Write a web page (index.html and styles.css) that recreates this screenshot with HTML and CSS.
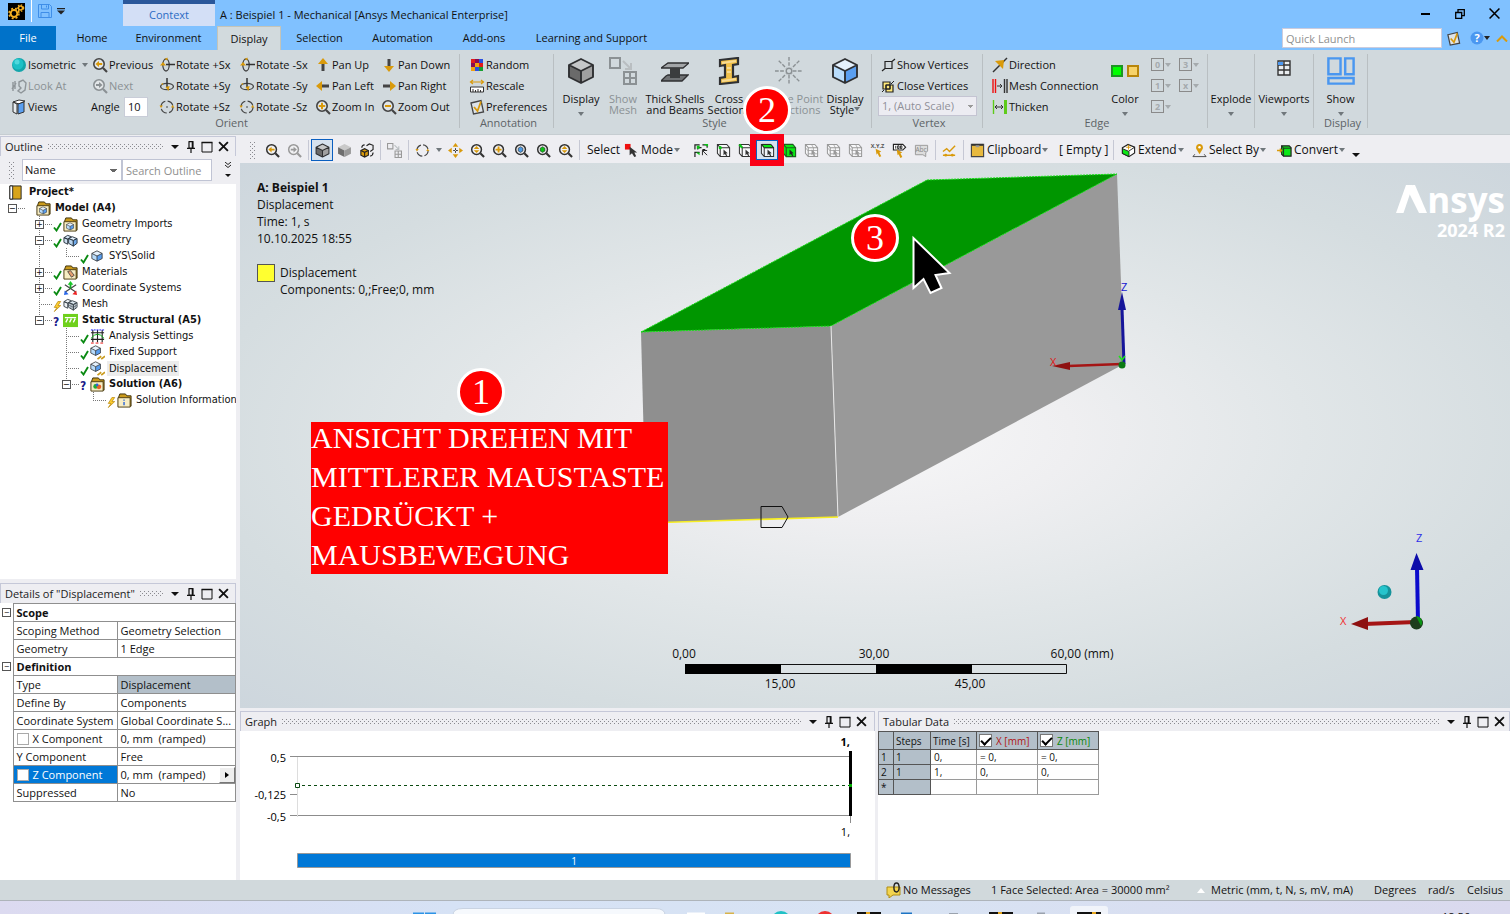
FILE: index.html
```html
<!DOCTYPE html>
<html lang="en">
<head>
<meta charset="utf-8">
<title>A : Beispiel 1 - Mechanical [Ansys Mechanical Enterprise]</title>
<link rel="stylesheet" href="styles.css">
</head>
<body>
<svg class="defs" aria-hidden="true">
  <symbol id="mag" viewBox="0 0 16 16"><circle cx="7" cy="7" r="5.2" fill="#f4f4f4" fill-opacity=".5" stroke="currentColor" stroke-width="1.6"/><path d="M11 11l4 4" stroke="currentColor" stroke-width="2.2"/></symbol>
  <symbol id="zoomprev" viewBox="0 0 16 16"><use href="#mag"/><path d="M3.5 7l3.5-3v2h3.200v2H7v2z" fill="#d99a0b"/></symbol>
  <symbol id="zoomnext" viewBox="0 0 16 16"><use href="#mag"/><path d="M10.500 7L7 4v2H4v2h3v2z" fill="currentColor"/></symbol>
  <symbol id="zoomin" viewBox="0 0 16 16"><use href="#mag"/><path d="M7 3.800v6.400M3.800 7h6.400" stroke="#d99a0b" stroke-width="2"/></symbol>
  <symbol id="zoomout" viewBox="0 0 16 16"><use href="#mag"/><path d="M4 7h6" stroke="#d99a0b" stroke-width="2"/></symbol>
  <symbol id="zoomdrag" viewBox="0 0 16 16"><use href="#mag"/><path d="M4 6.300L7 3.300l3 3zM4 7.700h6l-3 3z" fill="#d99a0b"/></symbol>
  <symbol id="zoomfit" viewBox="0 0 16 16"><use href="#mag"/><path d="M4.500 5.500L7 4l2.500 1.500v3L7 10 4.500 8.500z" fill="#4c9be8" stroke="#333" stroke-width=".7"/></symbol>
  <symbol id="zoomsel" viewBox="0 0 16 16"><use href="#mag"/><path d="M4.500 5.500L7 4l2.500 1.500v3L7 10 4.500 8.500z" fill="#0bc416" stroke="#333" stroke-width=".7"/></symbol>
  <symbol id="rotx" viewBox="0 0 16 16"><ellipse cx="7" cy="8" rx="3.200" ry="6" fill="none" stroke="#444" stroke-width="1.300"/><path d="M7 7.500h9" stroke="#333" stroke-width="1.500"/><path d="M1 8.500L4 5l3 3.500zM5.500 2l3-1.500v3z" fill="#d99a0b"/></symbol>
  <symbol id="roty" viewBox="0 0 16 16"><ellipse cx="8" cy="8.500" rx="6.400" ry="3.200" fill="none" stroke="#444" stroke-width="1.300"/><path d="M8 0v9" stroke="#333" stroke-width="1.500"/><path d="M6.500 9l4-1-1 5zM2 6l2-1v2z" fill="#d99a0b"/></symbol>
  <symbol id="rotz" viewBox="0 0 16 16"><circle cx="8" cy="8" r="6" fill="none" stroke="#444" stroke-width="1.200" stroke-dasharray="7 2.400"/><path d="M.5 6.500H4L2 9zM12 8.500h3.500L13.500 6z" fill="#d99a0b"/></symbol>
  <symbol id="rotdot" viewBox="0 0 16 16"><use href="#rotz"/><circle cx="8" cy="8" r=".8" fill="#333"/></symbol>
  <symbol id="up" viewBox="0 0 16 16"><path d="M6.500 7h3v7h-3z" fill="#444"/><path d="M8 1l5 6H3z" fill="#d99a0b"/></symbol>
  <symbol id="cube" viewBox="0 0 28 28"><path d="M2 8l12-6 12 6-12 6z" fill="#c5c7c8"/><path d="M2 8l12 6v12L2 20z" fill="#6a6a6a"/><path d="M26 8l-12 6v12l12-6z" fill="#a0a0a0"/><path d="M2 8l12-6 12 6v12l-12 6L2 20zM2 8l12 6 12-6M14 14v12" fill="none" stroke="#2f3032" stroke-width="1.900" stroke-linejoin="round"/></symbol>
  <symbol id="cubeblue" viewBox="0 0 28 28"><path d="M2 8l12-6 12 6-12 6z" fill="#e4f1fd"/><path d="M2 8l12 6v12L2 20z" fill="#b8dcfb"/><path d="M26 8l-12 6v12l12-6z" fill="#5a9ff0"/><path d="M2 8l12-6 12 6v12l-12 6L2 20zM2 8l12 6 12-6M14 14v12" fill="none" stroke="#2f3032" stroke-width="1.900" stroke-linejoin="round"/></symbol>
  <symbol id="cubeplain" viewBox="0 0 28 28"><path d="M2 8l12-6 12 6-12 6z" fill="#c9c9c9"/><path d="M2 8l12 6v12L2 20z" fill="#6e6e6e"/><path d="M26 8l-12 6v12l12-6z" fill="#999"/></symbol>
  <symbol id="mesh" viewBox="0 0 28 28"><path d="M1 1h10v10H1zM15 15h12v12H15zM21 15v12M15 21h12" fill="none" stroke="currentColor" stroke-width="2"/><path d="M14 4l7 7M22 6v6h-6" fill="none" stroke="#b9bec1" stroke-width="2"/></symbol>
  <symbol id="selbox" viewBox="0 0 16 16"><path d="M1.500 1.500h10l3 3.500v9.500h-10l-3-3.500zM4.500 5v9.500M4.500 5h10M1.500 1.500l3 3.500" fill="#fff" fill-opacity=".6" stroke="currentColor" stroke-width="1.100"/><path d="M8 7v6l1.500-1.200 1.500 2.200 1-.7-1.300-2 1.800-.3z" fill="currentColor"/></symbol>
  <symbol id="meshbox" viewBox="0 0 16 16"><use href="#selbox"/><path d="M4.500 8h10M4.500 11.500h10M8 1.500l2 3.500v9.500M1.500 5l3 3.500" fill="none" stroke="currentColor" stroke-width=".8"/></symbol>
  <symbol id="pin" viewBox="0 0 10 12"><path d="M2.500.7h5M3 .7v6.500h4V.7M6.300.7v6.500M1 7.300h8M5 7.500V12" fill="none" stroke="#111" stroke-width="1.200"/></symbol>
  <symbol id="max" viewBox="0 0 12 12"><path d="M1 1.500h10v9.500H1z" fill="none" stroke="#111" stroke-width="1"/><path d="M.5 1.500h11" stroke="#111" stroke-width="1.500"/></symbol>
  <symbol id="x" viewBox="0 0 10 10"><path d="M1 1l8 8M9 1L1 9" stroke="#111" stroke-width="1.700"/></symbol>
  <symbol id="ok" viewBox="0 0 9 10"><path d="M1 6l2.500 3L8 1.500" fill="none" stroke="#0a8a12" stroke-width="1.900"/></symbol>
  <symbol id="bolt" viewBox="0 0 9 12"><path d="M5 .5L1 7h3L1 11.500 8 5H5l3-4.500z" fill="#ffcf30" stroke="#b8860b" stroke-width=".8"/></symbol>
  <symbol id="folder" viewBox="0 0 16 16"><path d="M3 1h6l1.500 2H15v11H1.500V5z" fill="#c99a1c" stroke="#3a2d08"/><path d="M1 5h13v10H1z" fill="#f7edc4" stroke="#4a3b10"/></symbol>
  <symbol id="foldcube" viewBox="0 0 16 16"><use href="#folder"/><use href="#cubeblue" x="3" y="5.500" width="9" height="9"/></symbol>
  <symbol id="bodies" viewBox="0 0 16 16"><path d="M1 5l4-2.500 4 1.500L5 6.500zM1 5v5l4 2V6.500z" fill="#cfe0f0" stroke="#29343f"/><path d="M6 6l4-2 5 2-4 2z" fill="#e4f1fd" stroke="#29343f"/><path d="M6 6v5l5 3V8z" fill="#b8d4ef" stroke="#29343f"/><path d="M15 6v5l-4 3V8z" fill="#6fa9ea" stroke="#29343f"/></symbol>
  <symbol id="bodiesgray" viewBox="0 0 16 16"><path d="M1 5l4-2.500 4 1.500L5 6.500zM1 5v5l4 2V6.500z" fill="#eef2f5" stroke="#3d464e"/><path d="M6 6l4-2 5 2-4 2zM6 6v5l5 3V8zM15 6v5l-4 3V8z" fill="#dbe6ef" stroke="#3d464e"/><path d="M6 8.500l5 2.500 4-2.500M8.500 7v5.500M13 7v5.500" fill="none" stroke="#3d464e" stroke-width=".6"/></symbol>
  <symbol id="bc" viewBox="0 0 16 16"><use href="#cubeblue" width="12" height="12"/><path d="M8 15l4-3M12 15l4-3" stroke="#c99a1c" stroke-width="1.800"/></symbol>
  <symbol id="pref" viewBox="0 0 16 16"><path d="M2 4l10-2.500L14.500 13 4.500 15z" fill="#dde3e8" stroke="#444" stroke-width="1.300"/><path d="M5 8l3.500 4L12 2.500" fill="none" stroke="#d99a0b" stroke-width="1.800"/></symbol>
</svg>

<div class="app">
<header class="titlebar">
  <svg class="applogo" viewBox="0 0 17 17"><path fill="#000" d="M0 0h17v17H0z"/><circle cx="6" cy="10.500" r="3.400" fill="none" stroke="#f5b021" stroke-width="2"/><circle cx="6" cy="10.500" r="5" fill="none" stroke="#f5b021" stroke-width="1.500" stroke-dasharray="2 2"/><circle cx="12.500" cy="5" r="2" fill="none" stroke="#f5b021" stroke-width="1.500"/><circle cx="12.500" cy="5" r="3.200" fill="none" stroke="#f5b021" stroke-width="1.200" stroke-dasharray="1.500 1.500"/></svg>
  <span class="vline"></span>
  <button class="flat" aria-label="Save"><svg width="14" height="14" viewBox="0 0 14 14"><path d="M.5.500h11l2 2v11H.5zM3.500.500v4.500h7V.5M8.500 1.500v2M3 13.500v-5h8v5" fill="none" stroke="#3f8ee8"/></svg></button>
  <button class="flat" aria-label="Customize"><svg width="8" height="7" viewBox="0 0 8 7"><path d="M0 0h8v1.300H0zM0 2.500h8L4 6.500z" fill="#222"/></svg></button>
  <span class="context">Context</span>
  <h1>A : Beispiel 1 - Mechanical [Ansys Mechanical Enterprise]</h1>
  <div class="winbtns">
    <button class="flat" aria-label="Minimize"><svg width="10" height="10" viewBox="0 0 10 10"><path d="M0 6h9" stroke="#000" stroke-width="2"/></svg></button>
    <button class="flat" aria-label="Restore"><svg width="10" height="12" viewBox="0 0 10 12"><path d="M3 5V2.700h6.300v6H7M.7 5.500h6v6h-6z" fill="none" stroke="#000" stroke-width="1.300"/></svg></button>
    <button class="flat" aria-label="Close"><svg width="11" height="11" viewBox="0 0 10 10"><path d="M.5.500l9 9M9.500.500l-9 9" stroke="#000" stroke-width="1.400"/></svg></button>
  </div>
</header>
<nav class="tabs">
  <button class="tab file">File</button><button class="tab t1">Home</button><button class="tab t2">Environment</button><button class="tab on">Display</button><button class="tab t3">Selection</button><button class="tab t4">Automation</button><button class="tab t5">Add-ons</button><button class="tab t6">Learning and Support</button>
  <div class="quick">
    <input type="text" placeholder="Quick Launch" aria-label="Quick Launch">
    <button class="flat" aria-label="Options"><svg width="15" height="15"><use href="#pref"/></svg></button>
    <button class="flat" aria-label="Help"><svg width="22" height="14" viewBox="0 0 22 14"><circle cx="7" cy="7" r="6.500" fill="#4a97f0"/><text x="7" y="11" text-anchor="middle" class="q">?</text><path d="M14 5h6l-3 4z" fill="#222"/></svg></button>
    <button class="flat" aria-label="Collapse ribbon"><svg width="12" height="7" viewBox="0 0 12 7"><path d="M1 6.500L6 1.500l5 5" fill="none" stroke="#d99a0b" stroke-width="2"/></svg></button>
  </div>
</nav>

<section class="ribbon">
  <div class="group g-orient">
    <div class="orient">
      <button class="rb"><svg viewBox="0 0 16 16"><circle cx="8" cy="8" r="7" fill="#13a5ab"/><circle cx="7" cy="7" r="5.500" fill="#1cc0c6"/><circle cx="6" cy="5" r="2.500" fill="#4fd8dc"/></svg>Isometric<i class="caret gap"></i></button>
      <button class="rb"><svg><use href="#zoomprev"/></svg>Previous</button>
      <button class="rb"><svg><use href="#rotx"/></svg>Rotate +Sx</button>
      <button class="rb"><svg><use href="#rotx"/></svg>Rotate -Sx</button>
      <button class="rb"><svg><use href="#up"/></svg>Pan Up</button>
      <button class="rb"><svg class="r180"><use href="#up"/></svg>Pan Down</button>
      <button class="rb off"><svg viewBox="0 0 16 16"><path d="M2 4v9M4 3v8M1 11l4-6M8 4l4-2 3 3-1 7-4 3-3-2 3-3-2-2z" fill="none" stroke="#8e9599" stroke-width="1.400"/></svg>Look At</button>
      <button class="rb off"><svg><use href="#zoomnext"/></svg>Next</button>
      <button class="rb"><svg><use href="#roty"/></svg>Rotate +Sy</button>
      <button class="rb"><svg><use href="#roty"/></svg>Rotate -Sy</button>
      <button class="rb"><svg class="r270"><use href="#up"/></svg>Pan Left</button>
      <button class="rb"><svg class="r90"><use href="#up"/></svg>Pan Right</button>
      <button class="rb"><svg viewBox="0 0 16 16"><path d="M2 3l4 2v10l-4-2z" fill="#e7ecef" stroke="#333"/><path d="M2 3l6-2 6 1-6 3z" fill="#fff" stroke="#333"/><path d="M7 5l6-2v10l-6 2z" fill="#5a9ff0" stroke="#333"/></svg>Views</button>
      <div class="angle"><label for="angle">Angle</label><input id="angle" type="text" value="10"></div>
      <button class="rb"><svg><use href="#rotdot"/></svg>Rotate +Sz</button>
      <button class="rb"><svg><use href="#rotdot"/></svg>Rotate -Sz</button>
      <button class="rb"><svg><use href="#zoomin"/></svg>Zoom In</button>
      <button class="rb"><svg><use href="#zoomout"/></svg>Zoom Out</button>
    </div>
    <h2>Orient</h2>
  </div>
  <div class="group g-annot">
    <div class="stack">
      <button class="rb"><svg viewBox="0 0 16 16"><path fill="#e21a1a" d="M2 2h4v4H2zM10 6h4v4h-4z"/><path fill="#8a0a50" d="M6 2h4v4H6zM2 6h4v4H2z"/><path fill="#2a50e0" d="M10 2h4v4h-4zM6 10h4v4H6z"/><path fill="#f0a010" d="M6 6h4v4H6zM2 10h4v4H2z"/><path fill="#16a030" d="M10 10h4v4h-4z"/></svg>Random</button>
      <button class="rb"><svg viewBox="0 0 16 16"><path d="M2 4h12M4 2L1.500 4 4 6M12 2l2.500 2L12 6" fill="none" stroke="#d99a0b" stroke-width="1.200"/><path d="M1.500 9h13v5h-13zM4 11v3M6.500 12v2M9 11v3M11.500 12v2" fill="#fff" stroke="#333"/></svg>Rescale</button>
      <button class="rb"><svg><use href="#pref"/></svg>Preferences</button>
    </div>
    <h2>Annotation</h2>
  </div>
  <div class="group g-style">
    <div class="bigs">
      <button class="big w1"><svg><use href="#cube"/></svg><span>Display</span><i class="caret"></i></button>
      <button class="big w2 off"><svg><use href="#mesh"/></svg><span>Show<br>Mesh</span></button>
      <button class="big w3"><svg viewBox="0 0 28 28"><path d="M7 6h21l-6 5H0z" fill="#a3a6a8" stroke="#2f3032" stroke-width="1.300"/><path d="M9 11h10v8H9z" fill="#3b3d3e"/><path d="M7 18h20l-6 6H0l5-5z" fill="#6f7274" stroke="#2f3032" stroke-width="1.300"/><path d="M9 11h10v10H9z" fill="#3b3d3e"/></svg><span>Thick Shells<br>and Beams</span></button>
      <button class="big w4"><svg viewBox="0 0 28 28"><path d="M5 3l18-2v6l-5 1v12l5-1v6L5 27v-6l5-1V8l-5 1z" fill="#f2c14a" stroke="#2f3032" stroke-width="2.200"/><path d="M7 6l14-2M12 11h4M12 15h4M7 24l14-2" stroke="#fff6" stroke-width="2"/></svg><span>Cross<br>Sections</span></button>
      <button class="big w5 off"><svg class="wide" viewBox="0 0 30 30"><circle cx="15" cy="15" r="3" fill="none" stroke="#8b9194" stroke-width="1.500"/><path d="M15 0v11M15 19v11M0 15h11M19 15h11M4 4l8 8M26 4l-8 8M4 26l8-8M26 26l-8-8" stroke="#8b9194" stroke-width="1.500" stroke-dasharray="4 1.500"/></svg><span>Remote Point<br>Connections</span></button>
      <button class="big w6"><svg><use href="#cubeblue"/></svg><span>Display<br>Style<i class="caret"></i></span></button>
    </div>
    <h2>Style</h2>
  </div>
  <div class="group g-vertex">
    <div class="stack">
      <button class="rb"><svg viewBox="0 0 16 16"><path d="M5 4.500h7v7H5zM12 4.500L15 2M5 11.500L2 14" fill="none" stroke="#222" stroke-width="1.200"/></svg>Show Vertices</button>
      <button class="rb"><svg viewBox="0 0 16 16"><path d="M3 4h7v7H3zM6 7h7v7H6z" fill="#ffe97a" stroke="#222" stroke-width="1.200"/><path d="M6 7h4v4H6zM14 3l-3 3M2 14l2-2" fill="none" stroke="#222"/></svg>Close Vertices</button>
      <select disabled aria-label="Vertex scale"><option>1, (Auto Scale)</option></select>
    </div>
    <h2>Vertex</h2>
  </div>
  <div class="group g-edge">
    <div class="edge">
      <div class="stack">
        <button class="rb"><svg viewBox="0 0 16 16"><path d="M1 15L15 1" stroke="#333" stroke-width="1.500"/><path d="M3 4l9-1-1 9-3-3z" fill="#d99a0b"/></svg>Direction</button>
        <button class="rb"><svg viewBox="0 0 16 16"><path d="M1 1v14M3.500 1v14" stroke="#e11" stroke-width="1.400"/><path d="M12.500 1v14M15 1v14" stroke="#333" stroke-width="1.400"/><path d="M5 8h5M8 6l2 2-2 2" fill="none" stroke="#333"/></svg>Mesh Connection</button>
        <button class="rb"><svg viewBox="0 0 16 16"><path d="M1.500 1v14" stroke="#5ecb1a" stroke-width="1.400"/><path d="M12 1h3v14h-3z" fill="#5ecb1a"/><path d="M3 8h8M5 6L3 8l2 2M9 6l2 2-2 2" fill="none" stroke="#333"/></svg>Thicken</button>
      </div>
      <button class="big color"><svg class="wide" viewBox="0 0 30 28"><path d="M2 9h10v10H2z" fill="#0f0" stroke="#1d9424" stroke-width="2"/><path d="M18 9h10v10H18z" fill="#f7d36a" stroke="#b8860b" stroke-width="2"/></svg><span>Color</span><i class="caret"></i></button>
      <div class="types">
        <button class="ty"><b>0</b><i class="caret"></i></button><button class="ty"><b>3</b><i class="caret"></i></button>
        <button class="ty"><b>1</b><i class="caret"></i></button><button class="ty"><b>x</b><i class="caret"></i></button>
        <button class="ty"><b>2</b><i class="caret"></i></button>
      </div>
    </div>
    <h2>Edge</h2>
  </div>
  <div class="group g-exp"><button class="big"><svg></svg><span>Explode</span><i class="caret"></i></button></div>
  <div class="group g-view"><button class="big"><svg viewBox="0 0 28 28"><path d="M8 4h12v14H8zM14 4v14M8 8h12M8 13h12" fill="#e9edef" stroke="#333" stroke-width="1.400"/><path d="M8 5h5v3H8z" fill="#4a97f0"/></svg><span>Viewports</span><i class="caret"></i></button></div>
  <div class="group g-show"><button class="big"><svg class="wide" viewBox="0 0 30 30"><path d="M1.500 1.500h13v17h-13zM19.500 1.500h9v17h-9zM1.500 22.500h27v6h-27z" fill="none" stroke="#4a97f0" stroke-width="2.600"/></svg><span>Show</span><i class="caret"></i></button><h2>Display</h2></div>
</section>

<main class="work">
  <aside class="left">
    <section class="panel outline">
      <header class="phead"><h2>Outline</h2><i class="dots"></i><button class="pb" aria-label="Menu"><i class="caret dark"></i></button><button class="pb" aria-label="Pin"><svg width="10" height="12"><use href="#pin"/></svg></button><button class="pb" aria-label="Maximize"><svg width="12" height="12"><use href="#max"/></svg></button><button class="pb" aria-label="Close"><svg width="11" height="11"><use href="#x"/></svg></button></header>
      <div class="filter"><i class="grip"></i><select aria-label="Filter by"><option>Name</option></select><input type="text" placeholder="Search Outline" aria-label="Search Outline"><button class="more" aria-label="More"><svg width="6" height="16" viewBox="0 0 6 16"><path d="M0 0l3 2.500L6 0M0 3l3 2.500L6 3" fill="none" stroke="#222"/><path d="M0 12h6l-3 3z" fill="#111"/></svg></button></div>
      <ul class="tree">
        <li class="root"><div class="row proj"><svg viewBox="0 0 16 16"><path d="M2 1h12v14H2z" fill="#d8a41a" stroke="#222"/><path d="M2 1h3v14H2z" fill="#fff" stroke="#222"/></svg><b>Project*</b></div></li>
        <li class="top"><div class="row"><button class="ex">&#8722;</button><i class="st"></i><svg><use href="#foldcube"/></svg><b>Model (A4)</b></div>
          <ul>
            <li><div class="row"><button class="ex">+</button><svg class="st"><use href="#ok"/></svg><svg><use href="#foldcube"/></svg>Geometry Imports</div></li>
            <li><div class="row"><button class="ex">&#8722;</button><svg class="st"><use href="#ok"/></svg><svg><use href="#bodies"/></svg>Geometry</div>
              <ul><li><div class="row leaf"><svg class="st"><use href="#ok"/></svg><svg class="sm"><use href="#cubeblue"/></svg>SYS\Solid</div></li></ul></li>
            <li><div class="row"><button class="ex">+</button><svg class="st"><use href="#ok"/></svg><svg viewBox="0 0 16 16"><use href="#folder"/><path d="M5 7l3-1 4 5-3 2z" fill="#e6a070" stroke="#333" stroke-width=".8"/></svg>Materials</div></li>
            <li><div class="row"><button class="ex">+</button><svg class="st"><use href="#ok"/></svg><svg viewBox="0 0 16 16"><path d="M2 4l12 8M14 4L2 12" stroke="#444" stroke-width="1.300"/><path d="M8 8V3" stroke="#17a827" stroke-width="2"/><path d="M5 4l3-4 3 4z" fill="#17c827"/><path d="M1 15l1-5 4 4z" fill="#2866e8"/><path d="M15 15l-1-5-4 4z" fill="#e22"/></svg>Coordinate Systems</div></li>
            <li><div class="row leaf"><svg class="st"><use href="#bolt"/></svg><svg><use href="#bodiesgray"/></svg>Mesh</div></li>
            <li><div class="row"><button class="ex">&#8722;</button><b class="st qm">?</b><svg viewBox="0 0 16 16"><path fill="#6fd01c" d="M0 1h16v14H0z"/><path d="M2 5h12M5 6l-2 4M9 6l-2 4M13 6l-2 4" stroke="#fff" stroke-width="1.400"/></svg><b>Static Structural (A5)</b></div>
              <ul>
                <li><div class="row leaf"><svg class="st"><use href="#ok"/></svg><svg viewBox="0 0 16 16"><path d="M3 1v13M8 1v13M13 1v13M1 4h14M1 11h14" stroke="#222" stroke-width="1.200"/><path d="M1 10q7-9 14 0" fill="none" stroke="#0db81b"/><path d="M1 1h14" stroke="#11f" stroke-dasharray="2 1"/><path d="M1 15h14" stroke="#e11" stroke-dasharray="3 2"/></svg>Analysis Settings</div></li>
                <li><div class="row leaf"><svg class="st"><use href="#ok"/></svg><svg><use href="#bc"/></svg>Fixed Support</div></li>
                <li><div class="row leaf"><svg class="st"><use href="#ok"/></svg><svg><use href="#bc"/></svg><span class="cur">Displacement</span></div></li>
                <li><div class="row"><button class="ex">&#8722;</button><b class="st qm">?</b><svg viewBox="0 0 16 16"><use href="#folder"/><circle cx="6" cy="10" r="2.500" fill="#1fae35"/><circle cx="9.500" cy="10.500" r="2.500" fill="#e8622a"/><circle cx="7.500" cy="8.500" r="1.500" fill="#2b66d8"/></svg><b>Solution (A6)</b></div>
                  <ul><li><div class="row leaf"><svg class="st"><use href="#bolt"/></svg><svg viewBox="0 0 16 16"><use href="#folder"/><path d="M7.500 9.500V13M7.500 7v1.300" stroke="#2b66d8" stroke-width="1.500"/></svg>Solution Information</div></li></ul></li>
              </ul></li>
          </ul></li>
      </ul>
    </section>
    <section class="panel details">
      <header class="phead"><h2>Details of "Displacement"</h2><i class="dots"></i><button class="pb" aria-label="Menu"><i class="caret dark"></i></button><button class="pb" aria-label="Pin"><svg width="10" height="12"><use href="#pin"/></svg></button><button class="pb" aria-label="Maximize"><svg width="12" height="12"><use href="#max"/></svg></button><button class="pb" aria-label="Close"><svg width="11" height="11"><use href="#x"/></svg></button></header>
      <table class="props">
        <colgroup><col class="k0"><col class="k1"><col></colgroup>
        <tr><td class="gut"><button class="ex">&#8722;</button></td><th colspan="2">Scope</th></tr>
        <tr><td class="gut"></td><td>Scoping Method</td><td>Geometry Selection</td></tr>
        <tr><td class="gut"></td><td>Geometry</td><td>1 Edge</td></tr>
        <tr><td class="gut"><button class="ex">&#8722;</button></td><th colspan="2">Definition</th></tr>
        <tr><td class="gut"></td><td>Type</td><td class="ro">Displacement</td></tr>
        <tr><td class="gut"></td><td>Define By</td><td>Components</td></tr>
        <tr><td class="gut"></td><td>Coordinate System</td><td>Global Coordinate S...</td></tr>
        <tr><td class="gut"></td><td><label><input type="checkbox">X Component</label></td><td>0, mm&nbsp; (ramped)</td></tr>
        <tr><td class="gut"></td><td>Y Component</td><td>Free</td></tr>
        <tr><td class="gut"></td><td class="picked"><label><input type="checkbox">Z Component</label></td><td><div class="cell">0, mm&nbsp; (ramped)<button class="fly" aria-label="Options"><svg width="4" height="6" viewBox="0 0 4 6"><path d="M0 0l4 3-4 3z"/></svg></button></div></td></tr>
        <tr><td class="gut"></td><td>Suppressed</td><td>No</td></tr>
      </table>
    </section>
  </aside>

  <div class="right">
    <div class="toolbar">
      <i class="grip"></i>
      <button class="tb" aria-label="Previous view"><svg><use href="#zoomprev"/></svg></button>
      <button class="tb off" aria-label="Next view"><svg><use href="#zoomnext"/></svg></button>
      <i class="sep"></i>
      <button class="tb sel" aria-label="Shaded with edges"><svg><use href="#cube"/></svg></button>
      <button class="tb" aria-label="Shaded"><svg><use href="#cubeplain"/></svg></button>
      <button class="tb" aria-label="Wireframe"><svg viewBox="0 0 16 16"><path d="M2 8l4-2 4 2v5l-4 2-4-2z" fill="#d99a0b" stroke="#222" stroke-width="1.200"/><path d="M2 8l4 2 4-2M6 10v5M8 3l3-2 4 1.500V7l-3 2M3 5q0-3 3-3M15 10q0 3-3 4" fill="none" stroke="#222" stroke-width="1.200"/></svg></button>
      <i class="sep"></i>
      <button class="tb off" aria-label="Show mesh"><svg><use href="#mesh"/></svg></button>
      <i class="sep"></i>
      <button class="tb" aria-label="Rotate"><svg><use href="#rotz"/></svg></button><i class="caret c11"></i>
      <button class="tb" aria-label="Pan"><svg viewBox="0 0 16 16"><path d="M8 0l3 4H5zM8 16l3-4H5zM0 8l4-3v6zM16 8l-4-3v6z" fill="#d99a0b"/><path d="M5.500 8h5M8 5.500v5" stroke="#333" stroke-dasharray="2 1"/></svg></button>
      <button class="tb" aria-label="Zoom"><svg><use href="#zoomdrag"/></svg></button>
      <button class="tb" aria-label="Box zoom"><svg><use href="#zoomin"/></svg></button>
      <button class="tb" aria-label="Zoom to fit"><svg><use href="#zoomfit"/></svg></button>
      <button class="tb" aria-label="Zoom to selection"><svg><use href="#zoomsel"/></svg></button>
      <button class="tb" aria-label="Zoom extents"><svg><use href="#zoomdrag"/></svg></button>
      <i class="sep"></i>
      <span class="tt w-sel">Select</span>
      <button class="tl w-mode"><svg viewBox="0 0 16 16"><path fill="#f01010" d="M1 1h6v6H1z"/><path d="M6 4v9l2.500-2 2.500 4 2-1-2-4h3z" fill="#333"/></svg>Mode<i class="caret"></i></button>
      <button class="tb" aria-label="Smart select"><svg viewBox="0 0 16 16"><path d="M1 7V2h5M9 2h5v3M1 15v-5h5M4 7V5h4M9 7h3" fill="none" stroke="#222" stroke-width="1.300"/><path d="M3 3h3v3H3zM10 1h5v3zM2 10h4v3z" fill="#0bc416"/><path d="M9 8l5 5M9 8v5M9 8h5" stroke="#222"/></svg></button>
      <button class="tb" aria-label="Vertex"><svg viewBox="0 0 16 16"><use href="#selbox"/><circle cx="4.500" cy="5" r="1.700" fill="#0bc416"/></svg></button>
      <button class="tb" aria-label="Edge"><svg viewBox="0 0 16 16"><use href="#selbox"/><path d="M1.500 1.500l3 3.500" fill="none" stroke="#0bc416" stroke-width="2.400"/></svg></button>
      <span class="marked"><button class="tb sel" aria-label="Face"><svg viewBox="0 0 16 16"><use href="#selbox"/><path d="M2 1.500h9.500l3 3.500h-10z" fill="#0be816" stroke="#222"/></svg></button><span class="badge b2">2</span></span>
      <button class="tb" aria-label="Body"><svg viewBox="0 0 16 16"><path d="M1.500 1.500h10l3 3.500v9.500h-10l-3-3.500zM4.500 5v9.500M4.500 5h10M1.500 1.500l3 3.500" fill="#0be816" stroke="#1b5f1f" stroke-width="1.200"/><path d="M8 7v6l1.500-1.200 1.500 2.200 1-.7-1.300-2 1.800-.3z" fill="#222"/></svg></button>
      <button class="tb off" aria-label="Node"><svg><use href="#meshbox"/></svg></button>
      <button class="tb off" aria-label="Element face"><svg><use href="#meshbox"/></svg></button>
      <button class="tb off" aria-label="Element"><svg><use href="#meshbox"/></svg></button>
      <button class="tb" aria-label="Coordinates"><svg viewBox="0 0 16 16"><text x="8" y="5" text-anchor="middle" class="xyz">X,Y,Z</text><path d="M6 6l6 3-2 1 2 4-2 1-2-4-1 1.500z" fill="#d99a0b"/></svg></button>
      <button class="tb" aria-label="Probe"><svg viewBox="0 0 16 16"><path d="M1.500 1.500h10l3 3-3 3h-10z" fill="#fff" stroke="#222" stroke-width="1.200"/><path d="M4 3v3M6 3h1.500v3H6zM9 3h1.500v3H9z" fill="none" stroke="#222"/><path d="M5 7l6 3-2 1 2 4-2 1-2-4-1 1z" fill="#d99a0b"/></svg></button>
      <button class="tb off" aria-label="Label"><svg viewBox="0 0 16 16"><path d="M1.500 2.500h13v6l-2 2v4l-3-2h-8z" fill="#ddd" stroke="#999"/><text x="7.500" y="10" text-anchor="middle" class="abc">Abc</text></svg></button>
      <i class="sep"></i>
      <button class="tb" aria-label="Chart"><svg viewBox="0 0 16 16"><path d="M1 9l4-3 3 3 6-6M1 13h13" fill="none" stroke="#d99a0b" stroke-width="1.500"/><circle cx="4" cy="13" r="1.500" fill="#d99a0b"/><circle cx="11" cy="13" r="1.500" fill="#d99a0b"/></svg></button>
      <i class="sep"></i>
      <button class="tl w-clip"><svg viewBox="0 0 16 16"><path d="M1.500 1.500h13v13h-13z" fill="#e8b93e" stroke="#444" stroke-width="1.200"/><path d="M2 1h12v2H2z" fill="#333"/><path d="M6 2.500h4v2H6z" fill="#999"/></svg>Clipboard<i class="caret"></i></button>
      <span class="tt w-empty">[ Empty ]</span>
      <i class="sep"></i>
      <button class="tl w-ext"><svg viewBox="0 0 16 16"><path d="M1.500 5l6-3.500 7 3v6l-6 4-7-3.500z" fill="#fff" stroke="#222" stroke-width="1.200"/><path d="M14.500 4.500l-6 4" stroke="#222"/><path d="M1.500 6l7 3v5.500l-7-3.500z" fill="#0be816" stroke="#222"/><path d="M8 2v5M5.500 4.500h5" stroke="#d99a0b"/></svg>Extend<i class="caret"></i></button>
      <button class="tl w-by"><svg viewBox="0 0 16 16"><path d="M8 12L4.500 6a3.700 3.700 0 1 1 7 0z" fill="#d99a0b"/><circle cx="8" cy="4.500" r="1.300" fill="#fff"/><path d="M3 12l-2 2.500h14L13 12" fill="none" stroke="#444"/></svg>Select By<i class="caret"></i></button>
      <button class="tl w-conv"><svg viewBox="0 0 16 16"><path d="M5 3h8l2 2v9H7l-2-2z" fill="#0be816" stroke="#222" stroke-width="1.300"/><path d="M5 3l2 2.500V14M7 5.500h8" fill="none" stroke="#222"/><path d="M0 8h5M3 6l2 2-2 2" fill="none" stroke="#d99a0b" stroke-width="1.400"/></svg>Convert<i class="caret"></i></button>
      <button class="flat ovf" aria-label="More"><i class="caret dark"></i></button>
    </div>

    <section class="canvas">
      <svg class="scene" viewBox="240 163 1270 545" preserveAspectRatio="xMinYMin meet">
        <path d="M641 332l190-6 7 191-192 6z" fill="#8f8f8f"/>
        <path d="M831 326l286-152 7 190-286 153z" fill="#999"/>
        <path d="M641 332l286-152 190-6-286 152z" fill="#009600" stroke="#18e018" stroke-width="1" stroke-dasharray="2 1"/>
        <path d="M831 326l7 191" stroke="#e8e8e8"/>
        <path d="M646 523l192-6" stroke="#f7ee22" stroke-width="1.500"/>
        <path d="M761 506.500h21l6 10.500-6 10.500h-21z" fill="none" stroke="#111"/>
        <path d="M1124 364l-2-56" stroke="#15159a" stroke-width="3"/><path d="M1122 292l4 18h-8z" fill="#15159a"/>
        <path d="M1122 364l-54 2" stroke="#a51515" stroke-width="2.500"/><path d="M1052 366l18-4v8z" fill="#8e1111"/>
        <circle cx="1122" cy="365" r="3.500" fill="#0b7a14"/><path d="M1119 356l3 4 3-4" fill="none" stroke="#1be51b" stroke-width="1.500"/>
        <text x="1121" y="291" class="ax" fill="#1515d0">Z</text><text x="1050" y="366" class="ax" fill="#e01515">X</text>
        <path d="M685.500 664.500h381v9h-381z" fill="none" stroke="#111"/><path d="M685 664h96v10h-96zM876 664h96v10h-96z"/>
        <g class="sc"><text x="684" y="658">0,00</text><text x="874" y="658">30,00</text><text x="1082" y="658">60,00 (mm)</text><text x="780" y="688">15,00</text><text x="970" y="688">45,00</text></g>
        <path d="M913.500 238v50l10-9 7 14 11-5-6-13 14-2z" fill="#000" stroke="#fff" stroke-width="2"/>
      </svg>
      <div class="info"><b>A: Beispiel 1</b><br>Displacement<br>Time: 1, s<br>10.10.2025 18:55
        <div class="legend"><i></i><span>Displacement<br>Components: 0,;Free;0, mm</span></div>
      </div>
      <div class="brand"><div class="name"><svg width="31" height="28" viewBox="0 0 31 28"><path d="M10 0h7L7.500 28H0z" fill="#fff"/><path d="M12 6l5-6h2l12 28h-8z" fill="#fff"/></svg>nsys</div><div class="rel">2024 R2</div></div>
      <svg class="triad" width="90" height="104" viewBox="1336 530 90 104">
        <path d="M1418 622l-1-55" stroke="#0b0bcc" stroke-width="4"/><path d="M1416.500 553l7 17h-13z" fill="#0d0daa"/>
        <path d="M1416 622l-52 2" stroke="#a51515" stroke-width="4"/><path d="M1351 624l17-7v13z" fill="#8e1111"/>
        <circle cx="1416.500" cy="623" r="6.500" fill="#1d3d1d"/><path d="M1416 616a6.500 6.500 0 0 1 5 10z" fill="#0b9614"/>
        <circle cx="1384.500" cy="592" r="7" fill="#15939b"/><circle cx="1383.500" cy="590.500" r="4.500" fill="#25c4cc"/>
        <text x="1416" y="542" class="ax" fill="#3030e8">Z</text><text x="1340" y="625" class="ax" fill="#f03030">X</text>
      </svg>
      <span class="badge b1">1</span><span class="badge b3">3</span>
      <div class="note"><p>ANSICHT DREHEN MIT<br>MITTLERER MAUSTASTE<br>GEDRÜCKT +<br>MAUSBEWEGUNG</p></div>
    </section>

    <div class="bottom">
      <section class="panel graph">
        <header class="phead"><h2>Graph</h2><i class="dots"></i><button class="pb" aria-label="Menu"><i class="caret dark"></i></button><button class="pb" aria-label="Pin"><svg width="10" height="12"><use href="#pin"/></svg></button><button class="pb" aria-label="Maximize"><svg width="12" height="12"><use href="#max"/></svg></button><button class="pb" aria-label="Close"><svg width="11" height="11"><use href="#x"/></svg></button></header>
        <svg class="plot" viewBox="241 731 633 149" preserveAspectRatio="xMinYMin meet">
          <path d="M290 756.500h560M290 815.500h560M290 794.500h7M850.500 816v7" stroke="#8c8c8c" fill="none"/><path d="M297.500 757v60" stroke="#ddd"/>
          <path d="M302 785.500h547" stroke="#0b4a12" stroke-dasharray="3 3"/><path d="M295.500 783.500h4v4h-4z" fill="#fff" stroke="#0b4a12"/>
          <path d="M849 751h3v65h-3z"/><path d="M849 784h3v3h-3z" fill="#0a0"/>
          <g class="pl"><text x="286" y="762">0,5</text><text x="286" y="799">-0,125</text><text x="286" y="821">-0,5</text><text x="850" y="746" class="bd">1,</text><text x="850" y="836">1,</text></g>
          <path d="M297.500 853.500h553v14h-553z" fill="#0078d7" stroke="#999"/><text x="574" y="865" class="pw">1</text>
        </svg>
      </section>
      <section class="panel tabular">
        <header class="phead"><h2>Tabular Data</h2><i class="dots"></i><button class="pb" aria-label="Menu"><i class="caret dark"></i></button><button class="pb" aria-label="Pin"><svg width="10" height="12"><use href="#pin"/></svg></button><button class="pb" aria-label="Maximize"><svg width="12" height="12"><use href="#max"/></svg></button><button class="pb" aria-label="Close"><svg width="11" height="11"><use href="#x"/></svg></button></header>
        <table class="data">
          <colgroup><col class="c1"><col class="c2"><col class="c3"><col class="c4"><col class="c4"></colgroup>
          <tr><th></th><th>Steps</th><th>Time [s]</th><th class="red"><label><input type="checkbox" checked>X [mm]</label></th><th class="grn"><label><input type="checkbox" checked>Z [mm]</label></th></tr>
          <tr><td class="h">1</td><td class="h">1</td><td>0,</td><td>= 0,</td><td>= 0,</td></tr>
          <tr><td class="h">2</td><td class="h">1</td><td>1,</td><td>0,</td><td>0,</td></tr>
          <tr><td class="h">*</td><td class="h"></td><td></td><td></td><td></td></tr>
        </table>
      </section>
    </div>
  </div>
</main>

<footer class="status">
  <span class="s1"><svg width="18" height="16" viewBox="0 0 18 16"><path d="M2 5h13v8H8l-4 3v-3H2z" fill="#f3d54e" stroke="#b08d12"/><ellipse cx="11.500" cy="5.500" rx="2.600" ry="4.500" fill="none" stroke="#222" stroke-width="1.400"/></svg>No Messages</span>
  <span class="s2">1 Face Selected: Area = 30000 mm²</span>
  <span class="s3"><svg width="8" height="5" viewBox="0 0 8 5"><path d="M4 0l4 5H0z" fill="#fff"/></svg>Metric (mm, t, N, s, mV, mA)</span>
  <span class="s4">Degrees</span><span class="s5">rad/s</span><span class="s6">Celsius</span>
</footer>
<div class="taskbar">
  <svg width="760" height="14" viewBox="400 900 760 14">
    <path d="M413 912.500h11v2h-11zM425 912.500h11v2h-11z" fill="#2c93e6"/>
    <path d="M453 915q0-6.500 10-6.500h192q10 0 10 6.500z" fill="#f6f9fd" stroke="#c9d3e2"/>
    <path d="M687 912.500h18v2h-18z" fill="#fff"/><path d="M725 912.500h9v2h-9z" fill="#d8b34a"/>
    <circle cx="781" cy="921" r="10" fill="#21c1c6"/><circle cx="825" cy="921" r="10" fill="#ee3030"/>
    <path d="M1070 914v-5q0-3 3-3h32q3 0 3 3v5z" fill="#f1f4fa"/>
    <path d="M857 912h24v2h-24zM989 912h24v2h-24zM1077 912h24v2h-24z" fill="#111"/><path d="M866 912h4v2h-4zM998 912h4v2h-4zM1092 912h4v2h-4z" fill="#e8a820"/>
    <path d="M901 912.500h11v2h-11z" fill="#1d74c4"/><path d="M949 913h9v2h-9zM1037 912.500h8v2h-8z" fill="#9aa2ad"/>
  </svg>
  <time>18:56</time>
</div>
</div>
</body>
</html>
```
FILE: styles.css
```css
* { box-sizing: border-box; }
html, body { height: 100%; }
body { margin: 0; overflow: hidden; font: 11px/16px "Open Sans", "Noto Sans", sans-serif; color: #111; }
button, input, select { font: inherit; color: inherit; margin: 0; padding: 0; border-radius: 0; }
button { background: none; border: 0; white-space: nowrap; }
h1, h2, p, ul { margin: 0; padding: 0; font: inherit; }
ul { list-style: none; }
svg { display: block; flex: none; }
.defs { position: absolute; width: 0; height: 0; }
.app { height: 100vh; display: flex; flex-direction: column; background: #eeeef2; }
.flat { display: flex; align-items: center; justify-content: center; }
.caret { flex: none; display: inline-block; width: 0; height: 0; border: 3px solid transparent; border-top: 4px solid #70777b; border-bottom: 0; }
.caret.dark { border-width: 4px 4px 0; border-top-color: #111; }
.grip, .dots { background: conic-gradient(from 270deg at 1px 1px, #8a8a90 90deg, transparent 0) 0 0 / 4px 4px, conic-gradient(from 270deg at 1px 1px, #8a8a90 90deg, transparent 0) 2px 2px / 4px 4px; }
.grip { flex: none; width: 5px; height: 17px; }
.off { color: #8b9194; }

.titlebar { flex: none; height: 26px; display: flex; align-items: center; background: #80c1ff; padding-left: 8px; }
.applogo { width: 17px; height: 17px; margin-bottom: 4px; }
.vline { width: 1px; height: 22px; background: #fff; margin: 0 5px 4px 6px; }
.titlebar > .flat { width: 16px; height: 22px; margin: 0 0 4px; }
.context { width: 92px; height: 26px; margin-left: 54px; border-top: 4px solid #2a579a; background: #d3dff6; color: #2b6cc4; text-align: center; line-height: 22px; }
.titlebar h1 { margin-left: 5px; padding-top: 4px; }
.winbtns { margin-left: auto; display: flex; gap: 12px; padding-right: 5px; }
.winbtns .flat { width: 22px; height: 22px; }

.tabs { flex: none; height: 24px; display: flex; background: #80c1ff; }
.tab { height: 24px; text-align: center; }
.tab.file { width: 56px; background: #0072c9; color: #fff; }
.tab.on { width: 64px; background: #d2dadd; border: 1px solid #c4c4b8; border-bottom: 0; }
.t1 { width: 72px; } .t2 { width: 81px; margin-right: 8px; } .t3 { width: 77px; } .t4 { width: 89px; } .t5 { width: 74px; } .t6 { width: 141px; }
.quick { margin-left: auto; display: flex; align-items: center; gap: 4px; padding-right: 2px; }
.quick input { width: 160px; height: 20px; border: 1px solid #ccd; background: #fff; padding-left: 3px; }
.quick .flat:nth-of-type(1) { margin-right: 5px; }
::placeholder { color: #8f8f8f; opacity: 1; }
.q { font: bold 11px "Open Sans", sans-serif; fill: #fff; }

.ribbon { flex: none; display: flex; height: 85px; background: #d1d9dd; padding: 4px 0 6px; border-bottom: 1px solid #c6cdd1; }
.group { display: flex; flex-direction: column; border-right: 1px solid #b9bfc2; height: 74px; }
.group h2 { height: 11px; line-height: 12px; text-align: center; color: #5d6366; padding-left: 4px; }
.orient { display: grid; grid-template-columns: 81px 67px 80px 76px 66px 78px; grid-auto-rows: 21px; padding-left: 11px; }
.g-orient { width: 460px; } .g-annot { width: 94px; } .g-style { width: 318px; } .g-vertex { width: 111px; } .g-edge { width: 225px; }
.g-exp { width: 47px; } .g-view { width: 59px; } .g-show { width: 54px; }
.g-annot .stack { padding-left: 9px; } .g-vertex .stack { padding-left: 8px; }
.stack { display: grid; grid-auto-rows: 21px; }
.rb { display: flex; align-items: center; gap: 1px; height: 21px; }
.rb svg { width: 16px; height: 16px; color: #444; }
.rb.off svg { color: #8b9194; }
.gap { margin-left: 5px; }
.r90 { transform: rotate(90deg); } .r180 { transform: rotate(180deg); } .r270 { transform: rotate(270deg); }
.angle { display: flex; align-items: center; justify-content: space-between; padding-right: 11px; margin-left: -1px; }
.angle input { width: 24px; height: 20px; border: 1px solid #c9cdd8; background: #fff; padding-left: 3px; }
.g-vertex select { appearance: none; width: 99px; height: 20px; margin-left: -2px; padding-left: 3px; border: 1px solid #c4c4d2; color: #909099; opacity: 1; background: linear-gradient(#999, #999) 89px 8px / 5px 1px no-repeat, linear-gradient(#999, #999) 90px 9px / 3px 1px no-repeat, linear-gradient(#999, #999) 91px 10px / 1px 1px no-repeat, #ececf2; }
.bigs { display: flex; height: 63px; padding-left: 5px; }
.big { display: flex; flex-direction: column; align-items: center; height: 63px; line-height: 11px; text-align: center; padding-top: 3px; }
.big svg { width: 28px; height: 28px; margin-bottom: 8px; }
.big svg.wide { width: 30px; }
.big > .caret { margin-top: 8px; }
.big span .caret { margin-bottom: 3px; }
.w1 { width: 44px; } .w2 { width: 40px; } .w3 { width: 64px; } .w4 { width: 44px; } .w5 { width: 75px; } .w6 { width: 38px; }
.edge { display: grid; grid-template-columns: 110px 46px 1fr; padding-left: 9px; }
.types { display: grid; grid-template-columns: 28px 28px; grid-auto-rows: 21px; padding-left: 3px; }
.ty { display: flex; align-items: center; gap: 1px; }
.ty b { width: 13px; height: 13px; border: 1px solid #8a8a8a; color: #a5aaad; font-size: 9px; line-height: 11px; }
.ty .caret { border-top-color: #a5aaad; }

.work { flex: 1; min-height: 0; display: flex; gap: 4px; padding-top: 1px; }
.left { width: 236px; flex: none; display: flex; flex-direction: column; gap: 4px; }
.panel { display: flex; flex-direction: column; background: #fff; }
.outline { flex: 1; }
.details { height: 297px; }
.phead { flex: none; height: 20px; display: flex; align-items: center; background: #eeeef2; border: 1px solid #c5c8d8; border-bottom: 0; padding: 0 4px; color: #222; }
.dots { flex: 1; height: 5px; margin: 0 3px 0 5px; }
.pb { width: 16px; height: 16px; display: flex; align-items: center; justify-content: center; }
.filter { flex: none; height: 28px; background: #eeeef2; display: flex; align-items: center; padding-left: 9px; }
.filter select { appearance: none; width: 100px; height: 22px; margin-left: 8px; padding-left: 2px; border: 1px solid #c0c4d4; background: linear-gradient(#666, #666) 87px 9px / 7px 1px no-repeat, linear-gradient(#666, #666) 88px 10px / 5px 1px no-repeat, linear-gradient(#666, #666) 89px 11px / 3px 1px no-repeat, #fff; }
.filter input { width: 90px; height: 22px; padding-left: 3px; border: 1px solid #c0c4d4; background: #fff; }
.more { margin-left: 13px; }

.tree { --dots: repeating-linear-gradient(#777 0 1px, transparent 1px 2px); white-space: nowrap; overflow: hidden; font-family: "DejaVu Sans Condensed", "Open Sans", sans-serif; font-size: 11px; }
.tree ul { padding-left: 27px; }
.tree > li { padding-left: 8px; }
.tree ul > li { background: var(--dots) 4px 0 / 1px 100% no-repeat; }
.tree ul > li:last-child { background-size: 1px 8px; }
.row { height: 16px; display: flex; align-items: center; background: repeating-linear-gradient(90deg, #777 0 1px, transparent 1px 2px) 4px 8px / 14px 1px no-repeat; }
.row svg { width: 15px; height: 15px; margin-right: 4px; }
.row svg.sm { width: 12px; height: 12px; margin: 0 6px 0 1px; }
.row .st { width: 9px; height: 11px; margin: 4px 1px 0 9px; }
.row.leaf .st { margin-left: 18px; }
.row .qm { font-size: 12px; line-height: 10px; color: #1a1a8a; }
.row.proj { background: none; }
.proj svg { margin-right: 6px; }
.ex { width: 9px; height: 9px; flex: none; border: 1px solid #555; background: #fff; font-size: 9px; line-height: 7px; text-align: center; display: flex; align-items: center; justify-content: center; }
.cur { background: #ececec; padding: 0 2px; margin-left: -2px; line-height: 15px; }

.props { border-collapse: collapse; table-layout: fixed; width: 236px; }
.k0 { width: 13px; } .k1 { width: 104px; }
.props td, .props th { height: 18px; padding: 0 0 0 3px; border: 1px solid #8f8f8f; text-align: left; line-height: 17px; overflow: hidden; white-space: nowrap; }
.props td.gut { border-width: 0; padding: 0 0 0 2px; }
.props .ro { background: #b3bfc9; }
.props .picked { background: #0078d7; color: #fff; }
.props label { display: flex; align-items: center; gap: 4px; }
.props input { appearance: none; width: 12px; height: 12px; border: 1px solid #aaa; background: #fff; }
.cell { display: flex; justify-content: space-between; align-items: center; }
.fly { width: 16px; height: 16px; background: #eee; border: 1px solid; border-color: #fff #777 #777 #fff; display: flex; align-items: center; justify-content: center; }

.right { flex: 1; min-width: 0; display: flex; flex-direction: column; }
.toolbar { flex: none; height: 27px; display: flex; align-items: center; padding: 1px 0 0 10px; }
.toolbar .grip { margin-right: 6px; }
.tb { flex: none; width: 22px; height: 22px; display: flex; align-items: center; justify-content: center; }
.tb svg, .tl svg { width: 15px; height: 15px; }
.tb { color: #333; } .tb.off { color: #999; }
.tb.sel { border: 1px solid #0a5fc0; background: #d6e2ee; }
.sep { flex: none; width: 1px; height: 20px; margin: 0 2px 0 3px; background: #c6c8d4; }
.c11 { margin: 0 2px 0 3px; }
.tl { flex: none; display: flex; align-items: center; gap: 2px; font-size: 12px; }
.tl .caret { margin-left: -1px; }
.tt { flex: none; font-size: 12px; }
.w-sel { width: 42px; padding-left: 5px; } .w-mode { width: 66px; } .w-clip { width: 87px; padding-left: 4px; } .w-empty { width: 57px; padding-left: 6px; } .w-ext { width: 76px; padding-left: 5px; } .w-by { width: 85px; } .w-conv { width: 75px; }
.ovf { padding-top: 10px; }
.xyz { font: bold 6px "Open Sans", sans-serif; fill: #555; }
.abc { font: 7px "Open Sans", sans-serif; fill: #888; }
.marked { position: relative; z-index: 5; flex: none; border: 6px solid #fa0016; margin: 0 -6px; }
.marked .tb { height: 20px; }

.canvas { flex: 1; position: relative; min-height: 0; overflow: hidden; background: radial-gradient(ellipse farthest-corner at 50% 50%, #f7f7f8 0, #efeff1 22%, #e1e6e8 48%, #d5dde0 75%, #cdd6dd 100%); }
.scene { position: absolute; inset: 0; width: 100%; height: 100%; }
.ax { font: 11px "Open Sans", sans-serif; }
.sc { font: 12px "Open Sans", sans-serif; text-anchor: middle; fill: #111; }
.info { position: absolute; left: 17px; top: 16px; font-size: 12px; line-height: 17px; }
.legend { display: flex; gap: 5px; margin-top: 17px; }
.legend i { width: 18px; height: 18px; border: 1px solid #555; background: #ffff30; }
.brand { position: absolute; right: 5px; top: 22px; color: #fff; font-weight: bold; text-align: right; }
.name { display: flex; align-items: baseline; height: 28px; font-size: 35px; line-height: 28px; }
.rel { font-size: 18px; line-height: 18px; margin-top: 8px; }
.triad { position: absolute; right: 84px; bottom: 74px; }
.badge { position: absolute; width: 48px; height: 48px; border: 3px solid #fff; border-radius: 50%; background: red; color: #fff; font: 36px/42px "Liberation Serif", serif; text-align: center; }
.b1 { left: 217px; top: 205px; }
.b2 { left: -13px; top: -54px; }
.b3 { left: 611px; top: 51px; }
.note { position: absolute; left: 71px; top: 259px; width: 357px; display: flow-root; background: red; color: #fff; font: 30px/39px "Liberation Serif", serif; white-space: nowrap; }
.note p { margin-top: -4px; }

.bottom { flex: none; height: 172px; display: flex; gap: 3px; padding-top: 3px; }
.graph { flex: 0 1 635px; }
.graph .phead { padding-right: 5px; }
.tabular { flex: 1; }
.tabular .phead { padding-right: 2px; }
.plot { width: 633px; height: 149px; margin: 0 1px; }
.pl { font: 11px "Open Sans", sans-serif; text-anchor: end; }
.bd { font-weight: bold; }
.pw { font: 10px "Open Sans", sans-serif; fill: #fff; text-anchor: middle; }
.data { border-collapse: collapse; table-layout: fixed; width: 220px; }
.c1 { width: 15px; } .c2 { width: 37px; } .c3 { width: 46px; } .c4 { width: 61px; }
.data th, .data td { height: 15px; line-height: 14px; padding: 0 0 0 3px; border: 1px solid #9a9a9a; text-align: left; font-weight: normal; font-size: 10px; white-space: nowrap; }
.data th { height: 18px; padding-left: 2px; }
.data th, .data .h { background: #b3bfc9; border-color: #555; }
.data .h { padding-left: 2px; }
.data label { display: flex; align-items: center; gap: 4px; }
.data input { appearance: none; width: 13px; height: 13px; background: #fff; border: 1px solid #777; display: grid; place-items: center; }
.data input::before { content: ""; width: 4px; height: 8px; border: solid #000; border-width: 0 2px 2px 0; transform: rotate(45deg); margin-top: -2px; }
.red { color: #b01515; } .grn { color: #0b860b; }

.status { flex: none; height: 21px; display: flex; align-items: center; justify-content: flex-end; background: #d1d9dc; border-bottom: 1px solid #aeb4ba; }
.status span { display: flex; align-items: center; white-space: nowrap; }
.s1 { width: 106px; } .s2 { width: 206px; } .s3 { width: 177px; gap: 6px; } .s4 { width: 54px; } .s5 { width: 39px; } .s6 { width: 43px; }
.taskbar { flex: none; height: 13px; overflow: hidden; display: flex; justify-content: space-between; padding: 0 40px 0 400px; background: linear-gradient(90deg, #dcdaf0, #d6e2f5 30%, #d8e3f3 60%, #dad9ee); }
.taskbar svg { margin-top: -1px; }
.taskbar time { padding-top: 8px; }
```
